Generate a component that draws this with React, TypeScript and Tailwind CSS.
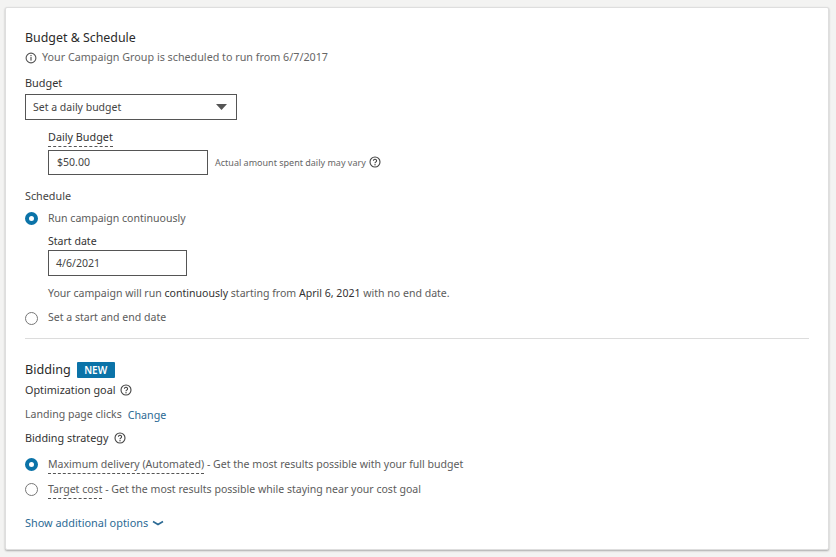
// Кампания: бюджет, расписание и ставки
import React from 'react';

const HelpIcon = () => (
  <svg width="12" height="12" viewBox="0 0 12 12" fill="none" className="shrink-0">
    <circle cx="6" cy="6" r="5" stroke="#444" strokeWidth="1.1" />
    <path d="M4.4 4.8a1.6 1.5 0 1 1 2.4 1.3c-.6.3-.8.6-.8 1.1" stroke="#444" strokeWidth="1.1" />
    <circle cx="6" cy="8.7" r="0.7" fill="#444" />
  </svg>
);

const InfoIcon = () => (
  <svg width="12" height="12" viewBox="0 0 12 12" fill="none" className="shrink-0">
    <circle cx="6" cy="6" r="4.9" stroke="#555" strokeWidth="1.1" />
    <rect x="5.4" y="5" width="1.2" height="3.6" fill="#555" />
    <rect x="5.4" y="3" width="1.2" height="1.2" fill="#555" />
  </svg>
);

const Radio = ({ checked }: { checked?: boolean }) =>
  checked ? (
    <span className="w-[13px] h-[13px] rounded-full border-[4px] border-[#0b73a8] bg-white shrink-0" />
  ) : (
    <span className="w-[13px] h-[13px] rounded-full border border-[#777] bg-white shrink-0" />
  );

const App: React.FC = () => {
  return (
    <div className="h-[557px] bg-[#f3f3f2] pt-[7px] pl-[5px] pr-[7px] font-['Noto_Sans',sans-serif] text-[10.55px] text-[#5c5c5c] overflow-hidden">
      <div className="h-[543px] bg-white border border-[#dedede] rounded-[2px] shadow-[0_1px_2px_rgba(0,0,0,0.3)] pl-[19px] pr-[19px] pt-[20px]">
        {/* Budget & Schedule */}
        <h2 className="text-[12.4px] leading-[20px] text-[#2a2a2a]">Budget &amp; Schedule</h2>
        <div className="flex items-center gap-[5px] h-[19px] text-[10.75px] text-[#666]">
          <InfoIcon />
          <span>Your Campaign Group is scheduled to run from 6/7/2017</span>
        </div>
        <div className="mt-[6px] h-[20px] leading-[20px] text-[10.9px] text-[#333]">Budget</div>
        <div className="mt-[1px] w-[212px] h-[26px] border border-[#555] flex items-center justify-between pl-[7px] pr-[9px] text-[10.5px] text-[#444]">
          <span className="pt-[1px]">Set a daily budget</span>
          <svg width="11" height="6" viewBox="0 0 11 6">
            <path d="M0 0h11L5.5 6z" fill="#555" />
          </svg>
        </div>

        <div className="ml-[23px] mt-[8px]">
          <div className="h-[19px] leading-[18px] text-[10.8px] text-[#333]">
            <span className="border-b border-dashed border-[#555] inline-block h-[19px]">Daily Budget</span>
          </div>
          <div className="mt-[3px] flex items-center">
            <div className="w-[160px] h-[25px] border border-[#555] flex items-center pl-[8px] pt-[1px] text-[#444]">$50.00</div>
            <span className="ml-[7px] text-[9px] text-[#666]">Actual amount spent daily may vary</span>
            <span className="ml-[3px] -mt-[1px]"><HelpIcon /></span>
          </div>
        </div>

        {/* Schedule */}
        <div className="mt-[11px] h-[20px] leading-[20px] text-[10.8px] text-[#444]">Schedule</div>
        <div className="mt-[2px] h-[20px] flex items-center gap-[10px]">
          <Radio checked />
          <span className="pt-[1px]">Run campaign continuously</span>
        </div>
        <div className="ml-[23px]">
          <div className="mt-[4px] h-[18px] leading-[18px] text-[#333]">Start date</div>
          <div className="w-[139px] h-[26px] border border-[#555] flex items-center pl-[7px] pt-[1px] text-[#444]">4/6/2021</div>
          <p className="mt-[8px] h-[18px] leading-[18px]">
            Your campaign will run <span className="text-[#333]">continuously</span> starting from{' '}
            <span className="text-[#333]">April 6, 2021</span> with no end date.
          </p>
        </div>
        <div className="mt-[6px] h-[20px] flex items-center gap-[10px]">
          <Radio />
          <span>Set a start and end date</span>
        </div>

        <div className="mt-[10px] border-t border-[#dcdcdc]" />

        {/* Bidding */}
        <div className="mt-[21px] h-[20px] flex items-center gap-[6px]">
          <h2 className="text-[12.6px] leading-[20px] text-[#2a2a2a]">Bidding</h2>
          <span className="bg-[#0b73a8] text-white text-[10px] font-semibold h-[16px] leading-[16px] w-[38px] text-center rounded-[1px]">NEW</span>
        </div>
        <div className="mt-[1px] h-[18px] flex items-center gap-[5px] text-[10.8px] text-[#333]">
          <span>Optimization goal</span>
          <HelpIcon />
        </div>
        <div className="mt-[7px] h-[18px] flex items-center gap-[6px]">
          <span>Landing page clicks</span>
          <span className="text-[10.7px] text-[#2c6a94]">Change</span>
        </div>
        <div className="mt-[5px] h-[18px] flex items-center gap-[5px] text-[10.8px] text-[#333]">
          <span>Bidding strategy</span>
          <HelpIcon />
        </div>

        <div className="mt-[8px] h-[20px] flex items-center gap-[10px]">
          <span className="-mt-[2px] flex"><Radio checked /></span>
          <span>
            <span className="border-b border-dashed border-[#555] pb-[2px]">Maximum delivery (Automated)</span>
            {' '}- Get the most results possible with your full budget
          </span>
        </div>
        <div className="mt-[5px] h-[20px] flex items-center gap-[10px]">
          <span className="-mt-[2px] flex"><Radio /></span>
          <span>
            <span className="border-b border-dashed border-[#555] pb-[2px]">Target cost</span>
            {' '}- Get the most results possible while staying near your cost goal
          </span>
        </div>

        <div className="mt-[14px] h-[18px] flex items-center gap-[4px] text-[10.9px] text-[#2c6a94]">
          <span>Show additional options</span>
          <svg width="12" height="7" viewBox="0 0 12 7" fill="none">
            <path d="M1 1.5l5 3 5-3" stroke="#2c6a94" strokeWidth="1.6" />
          </svg>
        </div>
      </div>
    </div>
  );
};

export default App;
